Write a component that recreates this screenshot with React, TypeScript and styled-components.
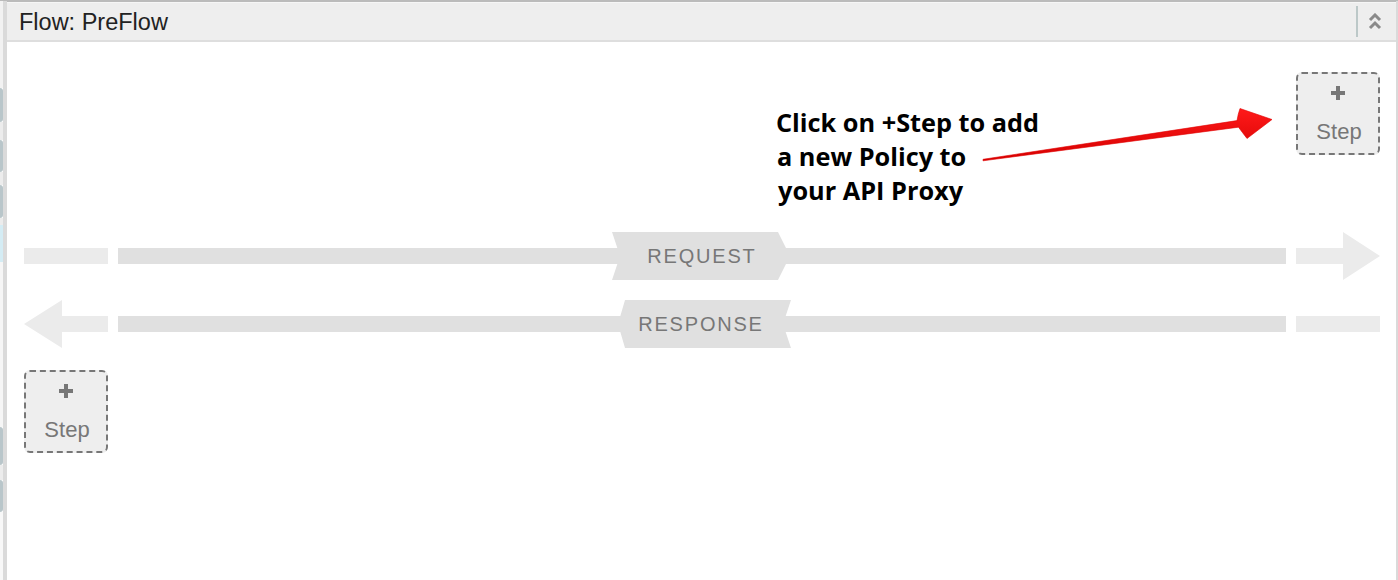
import React from "react";
import styled, { createGlobalStyle } from "styled-components";

const Global = createGlobalStyle`
  html, body { margin: 0; padding: 0; background: #fff; }
  body { font-family: "Liberation Sans", Arial, sans-serif; }
`;

const Page = styled.div`
  width: 1398px;
  height: 580px;
  display: flex;
  overflow: hidden;
  background: #fff;
`;

const LeftRail = styled.div`
  width: 3px;
  display: flex;
  flex-direction: column;
  border-top: 1px solid #bbb;
`;

const RailSeg = styled.div<{ $h: number; $c: string; $round?: boolean }>`
  height: ${(p) => p.$h}px;
  background: ${(p) => p.$c};
  border-radius: ${(p) => (p.$round ? "0 3px 3px 0" : "0")};
  flex-shrink: 0;
`;

const LeftBar = styled.div`
  width: 4px;
  background: #dadada;
  border-top: 1px solid #bbb;
`;

const RightBar = styled.div`
  width: 2px;
  background: #dadada;
  border-top: 1px solid #bbb;
`;

const Panel = styled.div`
  flex: 1;
  display: flex;
  flex-direction: column;
  border-top: 2px solid #bbb;
  min-width: 0;
`;

const Header = styled.div`
  height: 37px;
  border-top: 1px solid #f6f6f6;
  border-bottom: 2px solid #dedede;
  background: #eeeeee;
  display: flex;
  align-items: center;
  padding-left: 12px;
  padding-right: 14px;
`;

const Title = styled.div`
  flex: 1;
  font-family: "Liberation Sans", Arial, sans-serif;
  font-size: 23.5px;
  color: #222;
  padding-top: 1px;
`;

const Separator = styled.div`
  width: 2px;
  height: 31px;
  background: #bcc8c8;
  margin-right: 10px;
`;

const Canvas = styled.div`
  position: relative;
  flex: 1;
  background: #fff;
  display: flex;
  flex-direction: column;
  padding: 30px 16px 0 17px;
`;

const StepRow = styled.div<{ $align: "start" | "end"; $mt: number }>`
  display: flex;
  justify-content: ${(p) => (p.$align === "end" ? "flex-end" : "flex-start")};
  margin-top: ${(p) => p.$mt}px;
`;

const StepButton = styled.div`
  box-sizing: border-box;
  width: 84px;
  height: 83px;
  border: 2px dashed #777;
  border-radius: 6px;
  background: #eeeeee;
  display: flex;
  flex-direction: column;
  align-items: center;
  color: #777;
  font-family: "Liberation Sans", Arial, sans-serif;
`;

const Plus = styled.div`
  position: relative;
  flex: 0 0 14px;
  width: 14px;
  height: 14px;
  margin-top: 12px;
  &::before,
  &::after {
    content: "";
    position: absolute;
    background: #777;
  }
  &::before {
    left: 0;
    width: 14px;
    top: 5px;
    height: 4px;
  }
  &::after {
    top: 0;
    height: 14px;
    left: 5px;
    width: 4px;
  }
`;

const StepLabel = styled.div`
  font-size: 22px;
  line-height: 24px;
  margin-top: 20px;
  padding-left: 2px;
`;

const FlowRow = styled.div<{ $mt: number }>`
  display: flex;
  align-items: center;
  gap: 10px;
  height: 48px;
  margin-top: ${(p) => p.$mt}px;
`;

const EdgeBar = styled.div`
  width: 84px;
  height: 16px;
  background: #ebebeb;
  flex-shrink: 0;
`;

const EdgeArrow = styled.div<{ $dir: "left" | "right" }>`
  width: 84px;
  height: 48px;
  background: #ebebeb;
  flex-shrink: 0;
  clip-path: ${(p) =>
    p.$dir === "right"
      ? "polygon(0 16px, 47px 16px, 47px 0, 84px 24px, 47px 48px, 47px 32px, 0 32px)"
      : "polygon(0 24px, 38px 0, 38px 16px, 84px 16px, 84px 32px, 38px 32px, 38px 48px)"};
`;

const Track = styled.div`
  flex: 1;
  display: grid;
  place-items: center;
  height: 48px;
`;

const TrackBar = styled.div`
  grid-area: 1 / 1;
  width: 100%;
  height: 16px;
  background: #e0e0e0;
`;

const Tag = styled.div<{ $kind: "request" | "response" }>`
  grid-area: 1 / 1;
  height: 48px;
  width: ${(p) => (p.$kind === "request" ? 178 : 173)}px;
  margin-left: ${(p) => (p.$kind === "request" ? -2 : 5)}px;
  background: #e0e0e0;
  display: flex;
  align-items: center;
  justify-content: center;
  box-sizing: border-box;
  padding-left: ${(p) => (p.$kind === "request" ? 2 : 0)}px;
  padding-right: ${(p) => (p.$kind === "request" ? 0 : 7)}px;
  clip-path: ${(p) =>
    p.$kind === "request"
      ? "polygon(0 0, 166px 0, 178px 24px, 166px 48px, 0 48px, 8px 24px)"
      : "polygon(7px 0, 173px 0, 165px 24px, 173px 48px, 7px 48px, 0 24px)"};
  font-family: "Liberation Sans", Arial, sans-serif;
  font-size: 20px;
  letter-spacing: 1.8px;
  color: #777;
`;

const Note = styled.div`
  position: absolute;
  left: 769px;
  top: 63px;
  font-family: "Open Sans", "Noto Sans", sans-serif;
  font-weight: 700;
  font-size: 25.3px;
  line-height: 34px;
  color: #000;
  white-space: nowrap;
`;

const NoteLine = styled.div<{ $indent: number }>`
  padding-left: ${(p) => p.$indent}px;
`;

const ArrowSvg = styled.svg`
  position: absolute;
  left: 969px;
  top: 58px;
  overflow: visible;
`;

function CollapseIcon() {
  return (
    <svg width="14" height="17" viewBox="0 0 14 17">
      <polyline points="2,7 7,2 12,7" fill="none" stroke="#8a8a8a" strokeWidth="3" />
      <polyline points="2,15 7,10 12,15" fill="none" stroke="#8a8a8a" strokeWidth="3" />
    </svg>
  );
}

function Step() {
  return (
    <StepButton>
      <Plus />
      <StepLabel>Step</StepLabel>
    </StepButton>
  );
}

const rail: { h: number; c: string; r?: boolean }[] = [
  { h: 87, c: "#f2f2f2" },
  { h: 34, c: "#b9c6ca", r: true },
  { h: 18, c: "#ececec" },
  { h: 32, c: "#b9c6ca", r: true },
  { h: 13, c: "#ececec" },
  { h: 33, c: "#b9c6ca", r: true },
  { h: 7, c: "#ececec" },
  { h: 37, c: "#d4ecf4" },
  { h: 165, c: "#f6f6f6" },
  { h: 38, c: "#b9c6ca", r: true },
  { h: 15, c: "#ececec" },
  { h: 32, c: "#b9c6ca", r: true },
  { h: 70, c: "#f8f8f8" },
];

export default function App() {
  return (
    <>
      <Global />
      <Page>
        <LeftRail>
          {rail.map((s, i) => (
            <RailSeg key={i} $h={s.h} $c={s.c} $round={s.r} />
          ))}
        </LeftRail>
        <LeftBar />
        <Panel>
          <Header>
            <Title>Flow: PreFlow</Title>
            <Separator />
            <CollapseIcon />
          </Header>
          <Canvas>
            <StepRow $align="end" $mt={0}>
              <Step />
            </StepRow>
            <FlowRow $mt={77}>
              <EdgeBar />
              <Track>
                <TrackBar />
                <Tag $kind="request">REQUEST</Tag>
              </Track>
              <EdgeArrow $dir="right" />
            </FlowRow>
            <FlowRow $mt={20}>
              <EdgeArrow $dir="left" />
              <Track>
                <TrackBar />
                <Tag $kind="response">RESPONSE</Tag>
              </Track>
              <EdgeBar />
            </FlowRow>
            <StepRow $align="start" $mt={22}>
              <Step />
            </StepRow>

            <Note>
              <NoteLine $indent={0}>Click on +Step to add</NoteLine>
              <NoteLine $indent={1}>a new Policy to</NoteLine>
              <NoteLine $indent={2}>your API Proxy</NoteLine>
            </Note>
            <ArrowSvg width="304" height="70" viewBox="0 0 304 70">
              <defs>
                <linearGradient id="redg" x1="0" y1="0" x2="0" y2="1">
                  <stop offset="0" stopColor="#ff1a1a" />
                  <stop offset="1" stopColor="#d40000" />
                </linearGradient>
              </defs>
              <path
                d="M7,59.3 L261,20.6 Q262,14 264,8.5 L296,19.5 L271,38.5 Q266,32 262.5,27.2 L7,60.8 Z"
                fill="url(#redg)"
                stroke="#e00000"
                strokeWidth="0.6"
                strokeLinejoin="round"
              />
            </ArrowSvg>
          </Canvas>
        </Panel>
        <RightBar />
      </Page>
    </>
  );
}
